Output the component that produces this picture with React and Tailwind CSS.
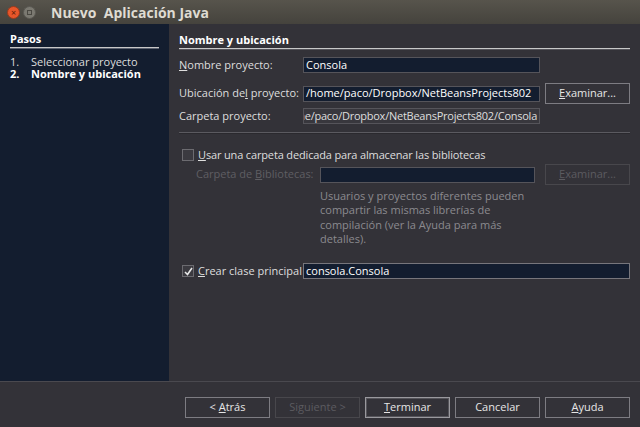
import React from "react";

const font = { fontFamily: '"Open Sans", "DejaVu Sans", sans-serif' };

const Boton = ({ children, disabled, primary }) => (
  <div
    className={
      "w-[85px] h-[21px] flex items-center justify-center text-[11px] border " +
      (disabled
        ? "border-[#48474c] text-[#5c5b60]"
        : primary
        ? "border-[#9a999e] text-[#e6e6e6] shadow-[inset_0_0_0_1px_#55545a]"
        : "border-[#7d7c82] text-[#e6e6e6]")
    }
  >
    {children}
  </div>
);

const Campo = ({ children, className }) => (
  <div
    className={
      "h-[16px] flex items-center px-[2px] text-[11px] border border-[#55545a] overflow-hidden whitespace-nowrap " +
      className
    }
  >
    {children}
  </div>
);

const Check = ({ checked }) => (
  <div className="w-[12px] h-[12px] border border-[#6c6b70] bg-[#3b3a40] flex items-center justify-center">
    {checked && (
      <svg width="9" height="9" viewBox="0 0 9 9">
        <path d="M1 5 L3.5 7.5 L8 1" stroke="#e8e8e8" strokeWidth="1.6" fill="none" />
      </svg>
    )}
  </div>
);

export default function App() {
  return (
    <div className="w-[640px] h-[427px] flex flex-col bg-[#333238] text-[#dedede] overflow-hidden" style={font}>
      {/* barra de titulo */}
      <div className="h-[24px] flex items-center bg-gradient-to-b from-[#57544c] to-[#45433d] pl-[7px]">
        <div className="w-[13px] h-[13px] rounded-full bg-[#e8562a] border border-[#9b3a1c] flex items-center justify-center text-[9px] leading-none text-[#5a1c08]">
          ×
        </div>
        <div className="w-[13px] h-[13px] rounded-full bg-[#7b7971] border border-[#5a5852] ml-[3px] flex items-center justify-center">
          <div className="w-[5px] h-[5px] border border-[#4a4842]" />
        </div>
        <div className="ml-[15px] text-[14px] font-bold text-[#dfdbd2]">Nuevo&nbsp; Aplicación Java</div>
      </div>

      <div className="flex-1 flex">
        {/* pasos */}
        <div className="w-[170px] bg-[#131d2f] pt-[8px] px-[10px]">
          <div className="text-[11px] font-bold text-white leading-[14px]">Pasos</div>
          <div className="h-[2px] border-t border-[#c8c8c8] border-b border-b-[#5c6270] mt-[1px]" />
          <div className="mt-[7px] text-[11px] leading-[12px] flex flex-col">
            <div className="flex h-[12px] items-center">
              <span className="w-[21px]">1.</span>
              <span>Seleccionar proyecto</span>
            </div>
            <div className="flex h-[12px] items-center font-bold text-white">
              <span className="w-[21px]">2.</span>
              <span>Nombre y ubicación</span>
            </div>
          </div>
        </div>

        {/* contenido */}
        <div className="flex-1 pl-[10px] pr-[10px] pt-[9px] text-[11px]">
          <div className="font-bold text-white leading-[14px]">Nombre y ubicación</div>
          <div className="h-[2px] border-t border-[#c8c8c8] border-b border-b-[#55545a] mt-[1px]" />

          <div className="flex items-center mt-[7px] h-[16px]">
            <div className="w-[124px]">
              <u>N</u>ombre proyecto:
            </div>
            <Campo className="w-[237px] bg-[#131d2f] text-white">Consola</Campo>
          </div>

          <div className="flex items-center mt-[11px] h-[19px]">
            <div className="w-[124px]">
              Ubicación de<u>l</u> proyecto:
            </div>
            <Campo className="w-[237px] bg-[#131d2f] text-white">/home/paco/Dropbox/NetBeansProjects802</Campo>
            <div className="ml-[5px]">
              <Boton>
                <span>
                  <u>E</u>xaminar...
                </span>
              </Boton>
            </div>
          </div>

          <div className="flex items-center mt-[5px] h-[16px]">
            <div className="w-[124px]">Carpeta proyecto:</div>
            <Campo className="w-[237px] bg-[#38373d] justify-end tracking-[-0.25px]">
              ne/paco/Dropbox/NetBeansProjects802/Consola
            </Campo>
          </div>

          <div className="h-[2px] border-t border-[#5b5a60] border-b border-b-[#2a292e] mt-[8px]" />

          <div className="flex items-center mt-[13px] ml-[3px]">
            <Check />
            <div className="ml-[4px] tracking-[-0.15px]">
              <u>U</u>sar una carpeta dedicada para almacenar las bibliotecas
            </div>
          </div>

          <div className="flex items-center mt-[1px] h-[20px]">
            <div className="w-[141px] pl-[17px] text-[#5f5e63]">
              Carpeta de <u>B</u>ibliotecas:
            </div>
            <Campo className="w-[215px] bg-[#131d2f] border-[#48474c]" />
            <div className="ml-[10px]">
              <Boton disabled>
                <span>
                  <u>E</u>xaminar...
                </span>
              </Boton>
            </div>
          </div>

          <div className="ml-[141px] mt-[4px] w-[230px] leading-[14.5px] text-[#8b8a8f]">
            Usuarios y proyectos diferentes pueden compartir las mismas librerías de compilación (ver la Ayuda para más detalles).
          </div>

          <div className="flex items-center mt-[16px] ml-[3px] h-[17px]">
            <Check checked />
            <div className="ml-[4px] w-[105px]">
              <u>C</u>rear clase principal
            </div>
            <Campo className="flex-1 bg-[#131d2f] text-white border-[#77767c]">consola.Consola</Campo>
          </div>
        </div>
      </div>

      {/* botones */}
      <div className="h-[46px] border-t border-[#4a494f] flex items-center justify-end gap-[5px] pr-[10px] pt-[6px]">
        <Boton>
          <span>
            &lt; <u>A</u>trás
          </span>
        </Boton>
        <Boton disabled>Siguiente &gt;</Boton>
        <Boton primary>
          <span>
            <u>T</u>erminar
          </span>
        </Boton>
        <Boton>Cancelar</Boton>
        <Boton>
          <span>
            <u>A</u>yuda
          </span>
        </Boton>
      </div>
    </div>
  );
}
